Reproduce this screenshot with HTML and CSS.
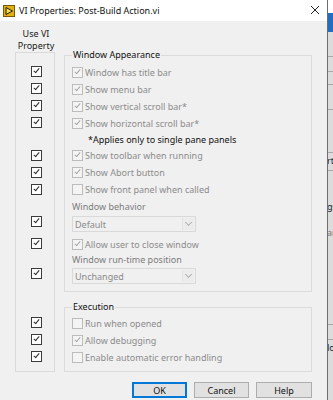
FILE: index.html
```html
<!DOCTYPE html>
<html lang="en">
<head>
  <meta charset="UTF-8" />
  <title>VI Properties</title>
  <link rel="stylesheet" href="styles.css">
</head>
<body>
  <div class="screen">
    <div class="dialog">
      <div class="titlebar">
        <svg class="app-icon" width="12" height="12" viewBox="0 0 12 12">
          <rect x="0.5" y="0.5" width="11" height="11" fill="#e2b010" stroke="#7a5a00" />
          <polygon points="3,2.5 9.5,6 3,9.5" fill="#ffe04a" stroke="#1a1a1a" stroke-width="1" />
        </svg>
        <span class="title">VI Properties: Post-Build Action.vi</span>
        <svg class="close" width="10" height="10" viewBox="0 0 10 10">
          <path d="M1 1 L9 9 M9 1 L1 9" stroke="#222" stroke-width="1" />
        </svg>
      </div>

      <div class="content">
        <div class="use-col">
          <div class="use-head">
            <div>Use VI</div>
            <div>Property</div>
          </div>
          <div class="use-box">
            <div class="slot"><span class="cb on"></span></div>
            <div class="slot"><span class="cb on"></span></div>
            <div class="slot"><span class="cb on"></span></div>
            <div class="slot"><span class="cb on"></span></div>
            <div class="slot after-note"><span class="cb on"></span></div>
            <div class="slot"><span class="cb on"></span></div>
            <div class="slot"><span class="cb on"></span></div>
            <div class="slot after-label"><span class="cb on"></span></div>
            <div class="slot after-drop"><span class="cb on"></span></div>
            <div class="slot after-label2"><span class="cb on"></span></div>
            <div class="slot after-group"><span class="cb on"></span></div>
            <div class="slot"><span class="cb on"></span></div>
            <div class="slot"><span class="cb on"></span></div>
          </div>
        </div>

        <div class="groups">
          <fieldset class="group appearance">
            <legend>Window Appearance</legend>
            <div class="opt"><span class="cb dim on"></span>Window has title bar</div>
            <div class="opt"><span class="cb dim on"></span>Show menu bar</div>
            <div class="opt"><span class="cb dim on"></span>Show vertical scroll bar*</div>
            <div class="opt"><span class="cb dim on"></span>Show horizontal scroll bar*</div>
            <div class="note">*Applies only to single pane panels</div>
            <div class="opt"><span class="cb dim on"></span>Show toolbar when running</div>
            <div class="opt"><span class="cb dim on"></span>Show Abort button</div>
            <div class="opt"><span class="cb dim"></span>Show front panel when called</div>
            <div class="field-label">Window behavior</div>
            <div class="dropdown"><span class="value">Default</span><span class="arrow"></span></div>
            <div class="opt spaced"><span class="cb dim on"></span>Allow user to close window</div>
            <div class="field-label short">Window run-time position</div>
            <div class="dropdown"><span class="value">Unchanged</span><span class="arrow"></span></div>
          </fieldset>

          <fieldset class="group execution">
            <legend>Execution</legend>
            <div class="opt"><span class="cb dim"></span>Run when opened</div>
            <div class="opt"><span class="cb dim on"></span>Allow debugging</div>
            <div class="opt"><span class="cb dim"></span>Enable automatic error handling</div>
          </fieldset>

          <div class="buttons">
            <button class="btn default">OK</button>
            <button class="btn">Cancel</button>
            <button class="btn wide">Help</button>
          </div>
        </div>
      </div>
    </div>

    <div class="behind">
      <div class="bg-top"></div>
      <div class="bg-blue"></div>
      <div class="bg-row h24"></div>
      <div class="bg-row h14"></div>
      <div class="bg-row h12"></div>
      <div class="bg-row h24"></div>
      <div class="bg-row h42"></div>
      <div class="bg-row h18 txt">rt</div>
      <div class="bg-plain h28"></div>
      <div class="bg-plain h16 txt">gs</div>
      <div class="bg-plain h10"></div>
      <div class="bg-plain h16 txt light">ar</div>
      <div class="bg-row h84"></div>
      <div class="bg-row h14"></div>
      <div class="bg-plain h16 txt">lo</div>
    </div>
  </div>
</body>
</html>
```

FILE: styles.css
```css
body {
  margin: 0;
  font-family: "Noto Sans", "Open Sans", sans-serif;
  font-size: 9px;
  color: #1a1a1a;
  background-color: #d6d6d6;
}

.screen {
  display: flex;
  width: 333px;
  height: 400px;
  overflow: hidden;
}

.dialog {
  width: 327px;
  flex: none;
  background-color: #f0f0f0;
  border-right: 1px solid #6e6e6e;
}

.titlebar {
  height: 21px;
  background-color: #ffffff;
  display: flex;
  align-items: center;
  padding: 0 7px 0 3px;
}

.app-icon {
  flex: none;
}

.title {
  margin-left: 4px;
  font-size: 9px;
  color: #111;
  flex: 1;
}

.close {
  flex: none;
  margin-top: -2px;
}

.content {
  display: grid;
  grid-template-columns: 40px 248px;
  column-gap: 9px;
  padding: 7px 0 0 15px;
}

/* left "Use VI Property" column */
.use-head {
  text-align: center;
  line-height: 12px;
  margin-left: 2px;
}

.use-box {
  border: 1px solid #dadada;
  padding: 10px 0 6px 0;
}

.slot {
  height: 17px;
  display: flex;
  align-items: center;
  justify-content: center;
  padding-left: 3px;
}

.slot.after-note { margin-top: 16px; }
.slot.after-label { margin-top: 15px; }
.slot.after-drop { margin-top: 5px; }
.slot.after-label2 { margin-top: 13px; }
.slot.after-group { margin-top: 32px; }

/* checkboxes */
.cb {
  position: relative;
  flex: none;
  width: 11px;
  height: 11px;
  box-sizing: border-box;
  border: 1px solid #3a3a3a;
  background-color: #ffffff;
  color: #2a2a2a;
}

.cb.on::after {
  content: "";
  position: absolute;
  left: 3px;
  top: 0px;
  width: 2px;
  height: 5px;
  border-right: 1px solid currentColor;
  border-bottom: 1px solid currentColor;
  transform: rotate(40deg);
}

.cb.dim {
  border-color: #bcbcbc;
  background-color: #f4f4f4;
  color: #a8a8a8;
}

/* group boxes */
.groups {
  display: flex;
  flex-direction: column;
}

.group {
  margin: 0;
  width: 248px;
  box-sizing: border-box;
  border: 1px solid #dcdcdc;
  padding: 3px 7px 7px 7px;
  min-inline-size: 0;
}

.group legend {
  padding: 0 1px;
  line-height: 12px;
  color: #111;
}

.appearance {
  margin-top: 21px;
}

.execution {
  margin-top: 9px;
  padding-top: 2px;
  padding-bottom: 5px;
}

.opt {
  height: 17px;
  display: flex;
  align-items: center;
  gap: 2px;
  color: #8c8c8c;
  white-space: nowrap;
}

.opt.spaced {
  margin-top: 4px;
}

.note {
  height: 15px;
  line-height: 15px;
  padding-left: 16px;
  color: #111;
}

.field-label {
  height: 17px;
  line-height: 17px;
  color: #7c7c7c;
}

.field-label.short {
  height: 14px;
  line-height: 14px;
}

.dropdown {
  margin-top: 1px;
  width: 124px;
  height: 16px;
  box-sizing: border-box;
  border: 1px solid #d9d9d9;
  background-color: #f0f0f0;
  display: flex;
  align-items: center;
  color: #8a8a8a;
}

.dropdown .value {
  flex: 1;
  padding-left: 2px;
}

.dropdown .arrow {
  position: relative;
  width: 11px;
  height: 12px;
  margin-right: 1px;
  border-left: 1px solid #e3e3e3;
  background-color: #ececec;
}

.dropdown .arrow::after {
  content: "";
  position: absolute;
  left: 3px;
  top: 2px;
  width: 4px;
  height: 4px;
  border-right: 1px solid #b0b0b0;
  border-bottom: 1px solid #b0b0b0;
  transform: rotate(45deg);
}

/* buttons */
.buttons {
  display: flex;
  justify-content: flex-end;
  gap: 7px;
  margin-top: 10px;
}

.btn {
  width: 55px;
  height: 16px;
  padding: 0;
  border: 1px solid #adadad;
  background-color: #e1e1e1;
  font-family: inherit;
  font-size: 9px;
  color: #111;
}

.btn.wide {
  width: 56px;
}

.btn.default {
  border: 1px solid #0078d7;
  box-shadow: inset 0 0 0 1px #0078d7;
}

/* strip of the window behind */
.behind {
  flex: 1;
  background-color: #dcdcdc;
  font-size: 9px;
  overflow: hidden;
  white-space: nowrap;
}

.bg-top { height: 13px; background-color: #ffffff; }
.bg-blue { height: 19px; background-color: #1f6fc5; }
.bg-row { border-bottom: 1px solid #a8a8a8; box-sizing: border-box; }
.bg-plain { box-sizing: border-box; }
.txt { line-height: 16px; color: #222; margin-left: -1px; }
.txt.light { color: #777; }

.h10 { height: 10px; }
.h12 { height: 13px; }
.h14 { height: 15px; }
.h16 { height: 16px; }
.h18 { height: 18px; }
.h24 { height: 25px; }
.h28 { height: 28px; }
.h42 { height: 43px; }
.h84 { height: 84px; }
```
